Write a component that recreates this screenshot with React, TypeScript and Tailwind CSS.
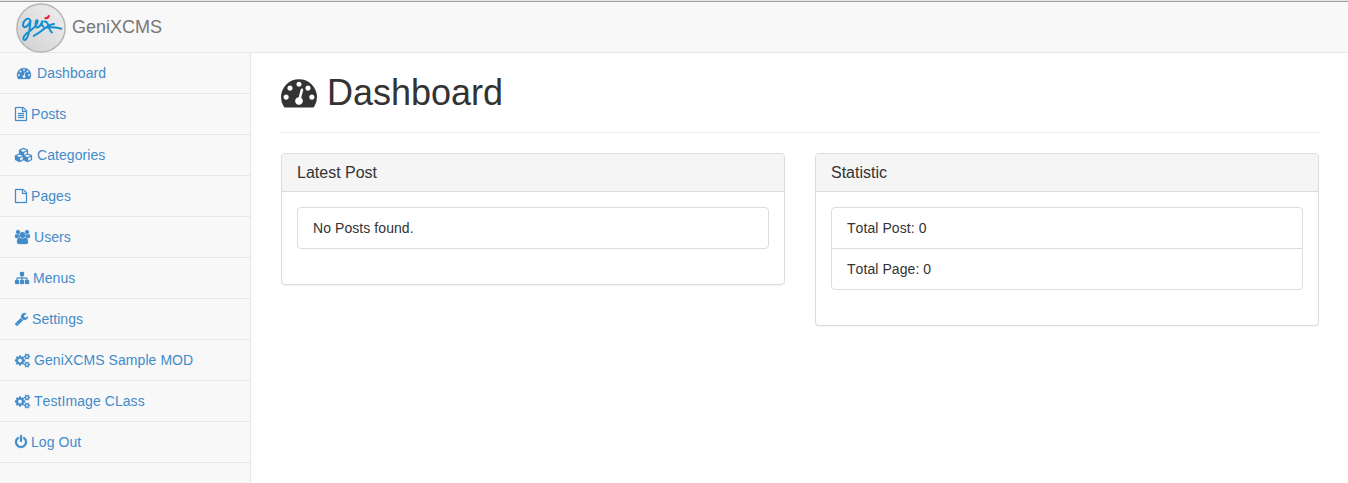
import type { ReactNode } from "react";

type Glyph = { box: string; w: string; d: string };

const SMALL_COG =
  "v140q0 16-149 31-12 27-30 52 51 113 51 138 0 4-4 7-122 71-124 71-8 0-46-47t-52-68q-20 2-30 2t-30-2q-14 21-52 68t-46 47q-2 0-124-71-4-3-4-7 0-25 51-138-18-25-30-52-149-15-149-31v-140q0-16 149-31 13-29 30-52-51-113-51-138 0-4 4-7 4-2 35-20t59-34 30-16q8 0 46 46.5t52 67.5q20-2 30-2t30 2q51-71 92-112l6-2q4 0 124 70 4 3 4 7 0 25-51 138 17 23 30 52 149 15 149 31z";

const PAGE =
  "M1596 380q28 28 48 76t20 88v1152q0 40-28 68t-68 28h-1344q-40 0-68-28t-28-68v-1600q0-40 28-68t68-28h896q40 0 88 20t76 48zm-444-244v376h376q-10-29-22-41l-313-313q-12-12-41-22zm384 1528v-1024h-416q-40 0-68-28t-28-68v-416h-768v1536h1280z";

const glyphs = {
  gauge: {
    box: "0 0 1792 1792",
    w: "w-[14px]",
    d: "M384 1152q0-53-37.5-90.5t-90.5-37.5-90.5 37.5-37.5 90.5 37.5 90.5 90.5 37.5 90.5-37.5 37.5-90.5zm192-448q0-53-37.5-90.5t-90.5-37.5-90.5 37.5-37.5 90.5 37.5 90.5 90.5 37.5 90.5-37.5 37.5-90.5zm428 481l101-382q6-26-7.5-48.5t-38.5-29.5-48 6.5-30 39.5l-101 382q-60 5-107 43.5t-63 98.5q-20 77 20 146t117 89 146-20 89-117q16-60-6-117t-72-91zm660-33q0-53-37.5-90.5t-90.5-37.5-90.5 37.5-37.5 90.5 37.5 90.5 90.5 37.5 90.5-37.5 37.5-90.5zm-640-640q0-53-37.5-90.5t-90.5-37.5-90.5 37.5-37.5 90.5 37.5 90.5 90.5 37.5 90.5-37.5 37.5-90.5zm448 192q0-53-37.5-90.5t-90.5-37.5-90.5 37.5-37.5 90.5 37.5 90.5 90.5 37.5 90.5-37.5 37.5-90.5zm320 448q0 261-141 483-19 29-54 29h-1402q-35 0-54-29-141-221-141-483 0-182 71-348t191-286 286-191 348-71 348 71 286 191 191 286 71 348z",
  },
  fileText: {
    box: "128 0 1536 1792",
    w: "w-[12px]",
    d:
      PAGE +
      "M512 800q0-14 9-23t23-9h704q14 0 23 9t9 23v64q0 14-9 23t-23 9h-704q-14 0-23-9t-9-23v-64zm736 224q14 0 23 9t9 23v64q0 14-9 23t-23 9h-704q-14 0-23-9t-9-23v-64q0-14 9-23t23-9h704zm0 256q14 0 23 9t9 23v64q0 14-9 23t-23 9h-704q-14 0-23-9t-9-23v-64q0-14 9-23t23-9h704z",
  },
  file: { box: "128 0 1536 1792", w: "w-[12px]", d: PAGE },
  cubes: {
    box: "0 0 2304 1792",
    w: "w-[18px]",
    d: "M640 1632l384-192v-314l-384 164v342zm-64-454l404-173-404-173-404 173zm1088 454l384-192v-314l-384 164v342zm-64-454l404-173-404-173-404 173zm-448-293l384-165v-266l-384 164v267zm-64-379l441-189-441-189-441 189zm1088 518v416q0 36-19 67t-52 47l-448 224q-25 14-57 14t-57-14l-448-224q-4-2-7-4-2 2-7 4l-448 224q-25 14-57 14t-57-14l-448-224q-33-16-52-47t-19-67v-416q0-38 21.5-70t56.5-48l434-186v-400q0-38 21.5-70t56.5-48l448-192q23-10 50-10t50 10l448 192q35 16 56.5 48t21.5 70v400l434 186q36 16 57 48t21 70z",
  },
  users: {
    box: "0 0 1920 1792",
    w: "w-[15px]",
    d: "M593 896q-162 5-265 128h-134q-82 0-138-40.5t-56-118.5q0-353 124-353 6 0 43.5 21t97.5 42.5 119 21.5q67 0 133-23-5 37-5 66 0 139 81 256zm1071 637q0 120-73 189.5t-194 69.5h-874q-121 0-194-69.5t-73-189.5q0-53 3.5-103.5t14-109 26.5-108.5 43-97.5 62-81 85.5-53.5 111.5-20q10 0 43 21.5t73 48 107 48 135 21.5 135-21.5 107-48 73-48 43-21.5q61 0 111.5 20t85.5 53.5 62 81 43 97.5 26.5 108.5 14 109 3.5 103.5zm-1024-1277q0 106-75 181t-181 75-181-75-75-181 75-181 181-75 181 75 75 181zm704 384q0 159-112.5 271.5t-271.5 112.5-271.5-112.5-112.5-271.5 112.5-271.5 271.5-112.5 271.5 112.5 112.5 271.5zm576 225q0 78-56 118.5t-138 40.5h-134q-103-123-265-128 81-117 81-256 0-29-5-66 66 23 133 23 59 0 119-21.5t97.5-42.5 43.5-21q124 0 124 353zm-128-609q0 106-75 181t-181 75-181-75-75-181 75-181 181-75 181 75 75 181z",
  },
  sitemap: {
    box: "0 0 1792 1792",
    w: "w-[14px]",
    d: "M1792 1248v320q0 40-28 68t-68 28h-320q-40 0-68-28t-28-68v-320q0-40 28-68t68-28h96v-192h-512v192h96q40 0 68 28t28 68v320q0 40-28 68t-68 28h-320q-40 0-68-28t-28-68v-320q0-40 28-68t68-28h96v-192h-512v192h96q40 0 68 28t28 68v320q0 40-28 68t-68 28h-320q-40 0-68-28t-28-68v-320q0-40 28-68t68-28h96v-192q0-52 38-90t90-38h512v-192h-96q-40 0-68-28t-28-68v-320q0-40 28-68t68-28h320q40 0 68 28t28 68v320q0 40-28 68t-68 28h-96v192h512q52 0 90 38t38 90v192h96q40 0 68 28t28 68z",
  },
  wrench: {
    box: "64 0 1664 1792",
    w: "w-[13px]",
    d: "M448 1472q0-26-19-45t-45-19-45 19-19 45 19 45 45 19 45-19 19-45zm644-420l-682 682q-37 37-90 37-52 0-91-37l-106-108q-38-36-38-90 0-53 38-91l681-681q39 98 114.5 173.5t173.5 114.5zm634-435q0 39-23 106-47 134-164.5 217.5t-258.5 83.5q-185 0-316.5-131.5t-131.5-316.5 131.5-316.5 316.5-131.5q58 0 121.5 16.5t107.5 46.5q16 11 16 28t-16 28l-293 169v224l193 107q5-3 79-48.5t135.5-81 70.5-35.5q15 0 23.5 10t8.5 25z",
  },
  cogs: {
    box: "0 0 1920 1792",
    w: "w-[15px]",
    d:
      "M896 960q0-106-75-181t-181-75-181 75-75 181 75 181 181 75 181-75 75-181zm768 512q0-52-38-90t-90-38-90 38-38 90q0 53 37.5 90.5t90.5 37.5 90.5-37.5 37.5-90.5zm0-1024q0-52-38-90t-90-38-90 38-38 90q0 53 37.5 90.5t90.5 37.5 90.5-37.5 37.5-90.5zm-384 421v185q0 10-7 19.5t-16 10.5l-155 24q-11 35-32 76 34 48 90 115 7 11 7 20 0 12-7 19-23 30-82.5 89.5t-78.5 59.5q-11 0-21-7l-115-90q-37 19-77 31-11 108-23 155-7 24-30 24h-186q-11 0-20-7.5t-10-17.5l-23-153q-34-10-75-31l-118 89q-7 7-20 7-11 0-21-8-144-133-144-160 0-9 7-19 10-14 41-53t47-61q-23-44-35-82l-152-24q-10-1-17-9.5t-7-19.5v-185q0-10 7-19.5t16-10.5l155-24q11-35 32-76-34-48-90-115-7-11-7-20 0-12 7-20 22-30 82-89t79-59q11 0 21 7l115 90q34-18 77-32 11-108 23-154 7-24 30-24h186q11 0 20 7.5t10 17.5l23 153q34 10 75 31l118-89q8-7 20-7 11 0 21 8 144 133 144 160 0 8-7 19-12 16-42 54t-45 60q23 48 34 82l152 23q10 2 17 10.5t7 19.5z" +
      "M1920 1402" + SMALL_COG +
      "M1920 378" + SMALL_COG,
  },
  power: {
    box: "128 0 1536 1792",
    w: "w-[12px]",
    d: "M1664 896q0 156-61 298t-164 245-245 164-298 61-298-61-245-164-164-245-61-298q0-182 80.5-343t226.5-270q43-32 95.5-25t83.5 50q32 42 24.5 94.5t-49.5 84.5q-98 74-151.5 181t-53.5 228q0 104 40.5 198.5t109.5 163.5 163.5 109.5 198.5 40.5 198.5-40.5 163.5-109.5 109.5-163.5 40.5-198.5q0-121-53.5-228t-151.5-181q-42-32-49.5-84.5t24.5-94.5q31-43 84-50t95 25q146 109 226.5 270t80.5 343zm-640-768v640q0 52-38 90t-90 38-90-38-38-90v-640q0-52 38-90t90-38 90 38 38 90z",
  },
} satisfies Record<string, Glyph>;

const menu: { label: string; icon: Glyph; fixed?: boolean }[] = [
  { label: "Dashboard", icon: glyphs.gauge, fixed: true },
  { label: "Posts", icon: glyphs.fileText },
  { label: "Categories", icon: glyphs.cubes },
  { label: "Pages", icon: glyphs.file },
  { label: "Users", icon: glyphs.users },
  { label: "Menus", icon: glyphs.sitemap },
  { label: "Settings", icon: glyphs.wrench },
  { label: "GeniXCMS Sample MOD", icon: glyphs.cogs },
  { label: "TestImage CLass", icon: glyphs.cogs },
  { label: "Log Out", icon: glyphs.power },
];

function Logo() {
  return (
    <svg viewBox="0 0 50 50" className="size-[50px] shrink-0" fill="none">
      <defs>
        <linearGradient id="disc" x1="0" y1="1" x2="1" y2="0">
          <stop offset="0" stopColor="#cfcfcf" />
          <stop offset="1" stopColor="#f0f0f0" />
        </linearGradient>
      </defs>
      <circle cx="25" cy="25" r="24.1" fill="url(#disc)" stroke="#b5b5b5" strokeWidth="1.5" />
      <g stroke="#148fd2" strokeWidth="2" strokeLinecap="round" strokeLinejoin="round">
        <path d="M13.500 16.300C11 14.500 7 18 7 22c0 3.500 4 2.500 6.200-1.500l1.300-3c-.3 5-.6 9-2 13.500-1.200 4.500-3 6.500-4.500 6-1.500-1-.5-4 2.500-6.500 4-3 8-5.500 10-9 1.300-2.300 1.500-4.300.5-4.300-1.400 0-2.300 6.500-.2 7.200 2.200.3 4.600-3 5.400-6.200-.6 3-.4 5 1 5" />
        <path d="M28.300 18.500c3-.3 3.800 2.500 4.500 5.200.5 2.300 1.500 4.600 3.200 5.800" />
        <path d="M38 21c-3.500.2-6.500 2-10 5-3.500 2.800-6.500 5-10.300 6.800M27.500 25.300c6-1.600 12-1 17.900.4" />
      </g>
      <path d="M29.500 15.200c1.700.2 2.800-.7 3.200-2.200" stroke="#ee1c32" strokeWidth="2.200" strokeLinecap="round" />
    </svg>
  );
}

function Panel({ title, children }: { title: string; children: ReactNode }) {
  return (
    <section className="rounded border border-[#ddd] bg-white shadow-[0_1px_1px_rgba(0,0,0,0.05)]">
      <h3 className="h-[38px] rounded-t-[3px] border-b border-[#ddd] bg-[#f5f5f5] px-[15px] text-base leading-[37px]">
        {title}
      </h3>
      <div className="px-[15px] pt-[15px] pb-[35px]">{children}</div>
    </section>
  );
}

function List({ items }: { items: string[] }) {
  return (
    <ul className="divide-y divide-[#ddd] rounded border border-[#ddd]">
      {items.map((item) => (
        <li key={item} className="px-[15px] py-[10px] text-sm leading-5 tracking-[0.07px]">
          {item}
        </li>
      ))}
    </ul>
  );
}

export default function App() {
  return (
    <div className="flex h-[483px] flex-col overflow-hidden bg-white font-['Liberation_Sans',Arial,sans-serif] text-[#333] [font-kerning:none]">
      <header className="flex h-[53px] shrink-0 flex-col border-b border-[#e7e7e7] bg-[#f8f8f8]">
        <div className="h-[2px] shrink-0 border-b border-[#a0a0a0] bg-[#e4e4e4]" />
        <a className="flex pt-px pl-4 text-lg leading-5 text-[#777]">
          <Logo />
          <span className="pt-[14px] pl-[6px]">GeniXCMS</span>
        </a>
      </header>
      <div className="flex min-h-0 flex-1">
        <nav className="w-[251px] shrink-0 border-r border-[#e7e7e7] bg-[#f8f8f8]">
          {menu.map(({ label, icon, fixed }) => (
            <a
              key={label}
              className="flex h-[41px] gap-1 border-b border-[#e7e7e7] px-[15px] pt-[10px] text-sm leading-5 tracking-[0.07px] text-[#428bca]"
            >
              <span className={fixed ? "flex w-[18px] justify-center pt-[3px]" : "flex pt-[3px]"}>
                <svg
                  viewBox={icon.box}
                  className={`${icon.w} h-[14px] overflow-visible`}
                  fill="currentColor"
                  stroke="currentColor"
                  strokeWidth="32"
                >
                  <path d={icon.d} />
                </svg>
              </span>
              {label}
            </a>
          ))}
        </nav>
        <main className="min-w-0 flex-1 pr-[29px] pl-[30px]">
          <h1 className="flex h-20 gap-[10px] border-b border-[#eee] pt-5 text-4xl leading-10">
            <svg viewBox={glyphs.gauge.box} className="mt-px size-9" fill="currentColor">
              <path d={glyphs.gauge.d} />
            </svg>
            Dashboard
          </h1>
          <div className="grid grid-cols-2 items-start gap-[30px] pt-5">
            <Panel title="Latest Post">
              <List items={["No Posts found."]} />
            </Panel>
            <Panel title="Statistic">
              <List items={["Total Post: 0", "Total Page: 0"]} />
            </Panel>
          </div>
        </main>
      </div>
    </div>
  );
}
